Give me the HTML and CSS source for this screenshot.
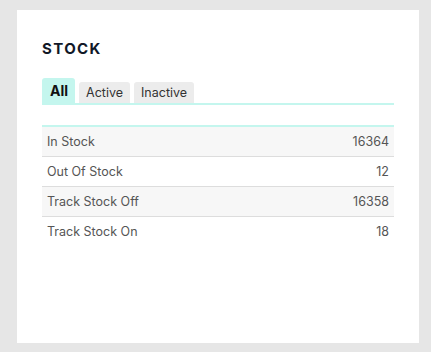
FILE: index.html
```html
<!DOCTYPE html>
<html lang="en">
<head>
    <meta charset="UTF-8">
    <meta name="viewport" content="width=device-width, initial-scale=1.0">
    <title>Stock</title>
    <link rel="stylesheet" href="styles.css">
</head>
<body>
    <div class="card">
        <h2 class="card-title">STOCK</h2>

        <div class="tabs">
            <div class="tab tab-active">All</div>
            <div class="tab">Active</div>
            <div class="tab">Inactive</div>
        </div>

        <table class="stock-table">
            <tr><td>In Stock</td><td class="num">16364</td></tr>
            <tr><td>Out Of Stock</td><td class="num">12</td></tr>
            <tr><td>Track Stock Off</td><td class="num">16358</td></tr>
            <tr><td>Track Stock On</td><td class="num">18</td></tr>
        </table>
    </div>
</body>
</html>
```

FILE: styles.css
```css
* {
    margin: 0;
    padding: 0;
    box-sizing: border-box;
}

body {
    font-family: 'Inter', 'Liberation Sans', sans-serif;
    background-color: #e6e6e6;
    padding: 10px 12px 9px 17px;
}

.card {
    background: white;
    height: 333px;
    padding: 30px 25px 20px 25px;
}

.card-title {
    font-size: 15px;
    line-height: 18px;
    font-weight: 700;
    letter-spacing: 1.4px;
    color: #111827;
}

.tabs {
    display: flex;
    align-items: flex-end;
    gap: 4px;
    margin-top: 20px;
    border-bottom: 2px solid #c4f6ee;
}

.tab {
    background: #ececec;
    color: #333;
    font-size: 12.5px;
    line-height: 21px;
    padding: 0 7px;
    border-radius: 3px 3px 0 0;
}

.tab-active {
    background: #c4f6ee;
    color: #111;
    font-weight: 700;
    font-size: 14px;
    line-height: 25px;
    padding: 0 7px 0 8px;
}

.stock-table {
    width: 100%;
    margin-top: 20px;
    border-collapse: collapse;
    border-top: 2px solid #c4f6ee;
    font-size: 12.5px;
    color: #555;
}

.stock-table td {
    height: 30px;
    padding: 0 5px;
    border-bottom: 1px solid #dddddd;
}

.stock-table tr:nth-child(odd) {
    background: #f7f7f7;
}

.stock-table tr:last-child td {
    border-bottom: none;
}

.stock-table .num {
    text-align: right;
}
```
